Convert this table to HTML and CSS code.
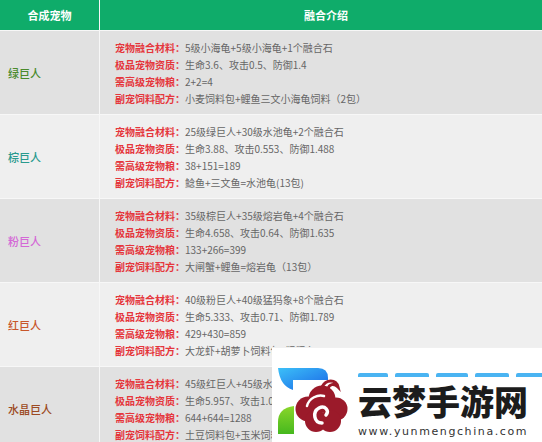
FILE: index.html
```html
<!DOCTYPE html>
<html lang="zh">
<head>
<meta charset="utf-8">
<link rel="stylesheet" href="styles.css">
</head>
<body>
<div class="page">
  <div class="table">
    <div class="hd hd-name">合成宠物</div>
    <div class="hd hd-info">融合介绍</div>

    <div class="cell name c-green row-dark">绿巨人</div>
    <div class="cell info row-dark">
      <div class="ln"><span class="lb">宠物融合材料：</span>5级小海龟+5级小海龟+1个融合石</div>
      <div class="ln"><span class="lb">极品宠物资质：</span>生命3.6、攻击0.5、防御1.4</div>
      <div class="ln"><span class="lb">需高级宠物粮：</span>2+2=4</div>
      <div class="ln"><span class="lb">副宠饲料配方：</span>小麦饲料包+鲤鱼三文小海龟饲料（2包）</div>
    </div>

    <div class="cell name c-teal row-light">棕巨人</div>
    <div class="cell info row-light">
      <div class="ln"><span class="lb">宠物融合材料：</span>25级绿巨人+30级水池龟+2个融合石</div>
      <div class="ln"><span class="lb">极品宠物资质：</span>生命3.88、攻击0.553、防御1.488</div>
      <div class="ln"><span class="lb">需高级宠物粮：</span>38+151=189</div>
      <div class="ln"><span class="lb">副宠饲料配方：</span>鲶鱼+三文鱼=水池龟(13包)</div>
    </div>

    <div class="cell name c-pink row-dark">粉巨人</div>
    <div class="cell info row-dark">
      <div class="ln"><span class="lb">宠物融合材料：</span>35级棕巨人+35级熔岩龟+4个融合石</div>
      <div class="ln"><span class="lb">极品宠物资质：</span>生命4.658、攻击0.64、防御1.635</div>
      <div class="ln"><span class="lb">需高级宠物粮：</span>133+266=399</div>
      <div class="ln"><span class="lb">副宠饲料配方：</span>大闸蟹+鲤鱼=熔岩龟（13包）</div>
    </div>

    <div class="cell name c-red row-light">红巨人</div>
    <div class="cell info row-light">
      <div class="ln"><span class="lb">宠物融合材料：</span>40级粉巨人+40级猛犸象+8个融合石</div>
      <div class="ln"><span class="lb">极品宠物资质：</span>生命5.333、攻击0.71、防御1.789</div>
      <div class="ln"><span class="lb">需高级宠物粮：</span>429+430=859</div>
      <div class="ln"><span class="lb">副宠饲料配方：</span>大龙虾+胡萝卜饲料包=猛犸象</div>
    </div>

    <div class="cell name c-brown row-dark">水晶巨人</div>
    <div class="cell info row-dark">
      <div class="ln"><span class="lb">宠物融合材料：</span>45级红巨人+45级水晶龟+10个融合石</div>
      <div class="ln"><span class="lb">极品宠物资质：</span>生命5.957、攻击1.02、防御2.011</div>
      <div class="ln"><span class="lb">需高级宠物粮：</span>644+644=1288</div>
      <div class="ln"><span class="lb">副宠饲料配方：</span>土豆饲料包+玉米饲料包=水晶龟</div>
    </div>
  </div>

  <div class="wm">
    <svg class="wm-logo" width="86" height="95" viewBox="0 0 86 95">
      <defs>
        <linearGradient id="gb" x1="0" y1="0" x2="1" y2="1">
          <stop offset="0" stop-color="#3cc0f8"/>
          <stop offset="1" stop-color="#1a66e6"/>
        </linearGradient>
        <linearGradient id="gg" x1="0" y1="0" x2="0" y2="1">
          <stop offset="0" stop-color="#8ad62a"/>
          <stop offset="1" stop-color="#46b81e"/>
        </linearGradient>
      </defs>
      <path d="M6,20 H46 Q56,20 56,30 V32 H21 V42 Q8,38 6,20 Z" fill="url(#gb)"/>
      <path d="M22,58 V86 H6 V74 Q6,60 22,58 Z" fill="url(#gg)"/>
      <g fill="#9b1a2a">
        <circle cx="36" cy="61" r="12.5"/>
        <circle cx="50" cy="51" r="13.5"/>
        <circle cx="64" cy="61" r="11.5"/>
        <circle cx="44" cy="73" r="11"/>
        <circle cx="58" cy="73" r="11"/>
      </g>
      <path d="M50,75 C42,75 40,64 47,60 C53,57 58,63 54,67" fill="none" stroke="#fff" stroke-width="3.5" stroke-linecap="round"/>
      <path d="M35,58 C37,50 46,46 52,48" fill="none" stroke="#fff" stroke-width="2.5" stroke-linecap="round"/>
      <path d="M50,39 C54,31 64,31 66,39 C62,35 57,36 56,41" fill="none" stroke="#9b1a2a" stroke-width="3" stroke-linecap="round"/>
    </svg>
    <div class="wm-text">
      <div class="bars"><span class="bar b1"></span><span class="bar b2"></span><span class="bar b3"></span><span class="bar b4"></span><span class="bar b5"></span></div>
      <div class="wm-title">云梦手游网</div>
      <div class="wm-url">www.yunmengchina.com</div>
    </div>
  </div>
</div>
</body>
</html>
```

FILE: styles.css
```css
html, body {
  margin: 0;
  padding: 0;
  background: #ffffff;
}
body {
  width: 542px;
  height: 442px;
  overflow: hidden;
  font-family: "Noto Sans CJK SC", "Noto Sans", sans-serif;
}
.page {
  position: relative;
  width: 542px;
  height: 442px;
  overflow: hidden;
}
.table {
  display: grid;
  grid-template-columns: 99px 1fr;
  grid-auto-rows: 83px;
  grid-template-rows: 30px;
  column-gap: 1px;
  row-gap: 1px;
  background: #f7f7f7;
}
.hd {
  background: #0fac6a;
  color: #ffffff;
  font-weight: bold;
  font-size: 11px;
  display: flex;
  align-items: center;
  justify-content: center;
  line-height: 30px;
}
.hd-info {
  padding-left: 10px;
}
.row-dark { background: #e1e1e1; }
.row-light { background: #efefef; }
.cell {
  display: flex;
  flex-direction: column;
  justify-content: center;
}
.name {
  font-size: 11px;
  padding-left: 8px;
  font-weight: 500;
}
.c-green { color: #4a8a2c; }
.c-teal { color: #2a9a8e; }
.c-pink { color: #d468d6; }
.c-red { color: #c8562a; }
.c-brown { color: #9c4a22; }
.info {
  padding-left: 15px;
  font-size: 10px;
  color: #666666;
}
.ln {
  line-height: 17px;
  white-space: nowrap;
}
.lb {
  color: #e5363c;
  font-weight: bold;
}
.wm {
  position: absolute;
  left: 272px;
  top: 347px;
  width: 270px;
  height: 95px;
  background: #ffffff;
  display: flex;
  border-top: 1px solid #f0f0f0;
}
.wm-logo {
  flex: none;
  display: block;
}
.wm-text {
  display: flex;
  flex-direction: column;
}
.bars {
  display: flex;
  gap: 7px;
  margin-top: 25px;
  height: 4px;
}
.bar {
  display: block;
  height: 4px;
  border-radius: 2px 2px 0 0;
  background: #4ab4f2;
}
.b1 { width: 30px; }
.b2 { width: 34px; }
.b3 { width: 32px; }
.b4 { width: 34px; }
.b5 { width: 30px; }
.wm-title {
  margin-top: 6px;
  font-size: 34px;
  line-height: 36px;
  font-weight: 900;
  color: #1c1c1c;
  white-space: nowrap;
}
.wm-url {
  margin-top: 6px;
  font-family: "DejaVu Sans", sans-serif;
  font-size: 11px;
  line-height: 14px;
  letter-spacing: 1.6px;
  color: #333333;
  white-space: nowrap;
}
```
